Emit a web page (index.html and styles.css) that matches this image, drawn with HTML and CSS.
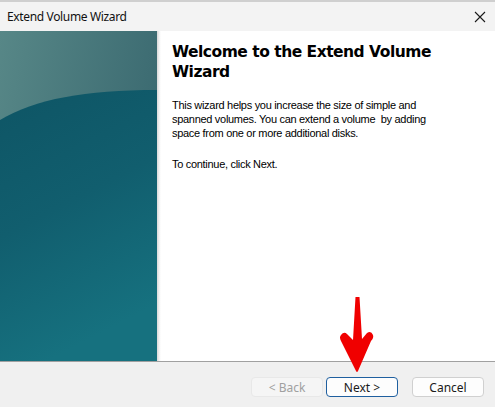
FILE: index.html
```html
<!DOCTYPE html>
<html>
<head>
    <title>Extend Volume Wizard</title>
    <link rel="stylesheet" href="styles.css">
</head>
<body>
    <div class="window">
        <div class="titlebar">
            <span class="title">Extend Volume Wizard</span>
            <svg class="close" width="12" height="12" viewBox="0 0 12 12">
                <path d="M1 1 L11 11 M11 1 L1 11" stroke="#1a1a1a" stroke-width="1.1" fill="none"/>
            </svg>
        </div>

        <div class="main">
            <div class="banner">
                <svg width="157" height="330" viewBox="0 0 157 330" preserveAspectRatio="none">
                    <defs>
                        <linearGradient id="sky" x1="0" y1="0" x2="1" y2="0.4">
                            <stop offset="0" stop-color="#578787"/>
                            <stop offset="1" stop-color="#3a6970"/>
                        </linearGradient>
                        <linearGradient id="deep" x1="0" y1="0" x2="0.3" y2="1">
                            <stop offset="0" stop-color="#0e5565"/>
                            <stop offset="0.5" stop-color="#115e6e"/>
                            <stop offset="1" stop-color="#16717f"/>
                        </linearGradient>
                    </defs>
                    <rect width="157" height="330" fill="url(#sky)"/>
                    <path d="M0 89 C 35 68, 85 59, 157 59 L157 330 L0 330 Z" fill="url(#deep)"/>
                </svg>
            </div>
            <div class="edge"></div>

            <div class="content">
                <h1>Welcome to the Extend Volume Wizard</h1>
                <p>This wizard helps you increase the size of simple and spanned volumes. You can extend a volume&nbsp; by adding space from one or more additional disks.</p>
                <p class="next-hint">To continue, click Next.</p>
            </div>
        </div>

        <div class="footer">
            <button class="btn" disabled>&lt; Back</button>
            <button class="btn btn-default">Next &gt;</button>
            <button class="btn btn-cancel">Cancel</button>
        </div>

        <!-- pointer over the Next button -->
        <svg class="arrow" width="40" height="80" viewBox="0 0 40 80">
            <path d="M18.5 2 L22.5 2 L25 44 L30 38 Q34 35 36 40 Q37 43 34 46 L21 76 Q20 78 19 76 L4 46 Q2 42 4 40 Q7 36 10 39 L16 45 Z" fill="#f00000"/>
        </svg>
    </div>
</body>
</html>
```

FILE: styles.css
```css
body {
    margin: 0;
    background-color: #f0f0f0;
}

.window {
    position: relative;
    width: 495px;
    height: 407px;
    display: flex;
    flex-direction: column;
    overflow: hidden;
}

.titlebar {
    height: 29px;
    border-top: 2px solid #cfcfcf;
    background-color: #f3f3f3;
    display: flex;
    align-items: center;
    justify-content: space-between;
    padding: 0 9px 0 7px;
    flex-shrink: 0;
}

.title {
    font-family: "Noto Sans", sans-serif;
    font-size: 12px;
    color: #111;
    letter-spacing: -0.35px;
}

.close {
    display: block;
    margin-top: 1px;
}

.main {
    display: flex;
    height: 330px;
    background-color: #fff;
    flex-shrink: 0;
}

.banner {
    width: 157px;
    flex-shrink: 0;
}

.banner svg {
    display: block;
}

.edge {
    width: 4px;
    flex-shrink: 0;
    background: linear-gradient(to right, #d8d8d8, #f4f4f4 60%, #fff);
}

.content {
    padding: 11px 12px 0 11px;
    color: #000;
}

.content h1 {
    font-family: "DejaVu Sans", Verdana, sans-serif;
    font-weight: bold;
    font-size: 15.5px;
    letter-spacing: -0.5px;
    line-height: 20px;
    margin: 0 0 16px 0;
    width: 270px;
}

.content p {
    font-family: "Liberation Sans", Arial, sans-serif;
    font-size: 11px;
    line-height: 14px;
    letter-spacing: -0.3px;
    margin: 0;
    width: 275px;
}

.content .next-hint {
    margin-top: 17px;
}

.footer {
    flex: 1;
    border-top: 1px solid #a0a0a0;
    background-color: #f0f0f0;
    display: flex;
    align-items: flex-start;
    justify-content: flex-end;
    padding: 15px 11px 0 0;
}

.btn {
    width: 72px;
    height: 20px;
    box-sizing: border-box;
    padding: 0;
    font-family: "Noto Sans", sans-serif;
    font-size: 12px;
    color: #1a1a1a;
    background-color: #fdfdfd;
    border: 1px solid #d0d0d0;
    border-radius: 4px;
}

.btn:disabled {
    color: #a0a0a0;
    background-color: #f5f5f5;
    border-color: #e8e8e8;
}

.btn-default {
    margin-left: 3px;
    border-color: #1f5f9f;
}

.btn-cancel {
    margin-left: 14px;
}

.arrow {
    position: absolute;
    left: 337px;
    top: 295px;
}
```
